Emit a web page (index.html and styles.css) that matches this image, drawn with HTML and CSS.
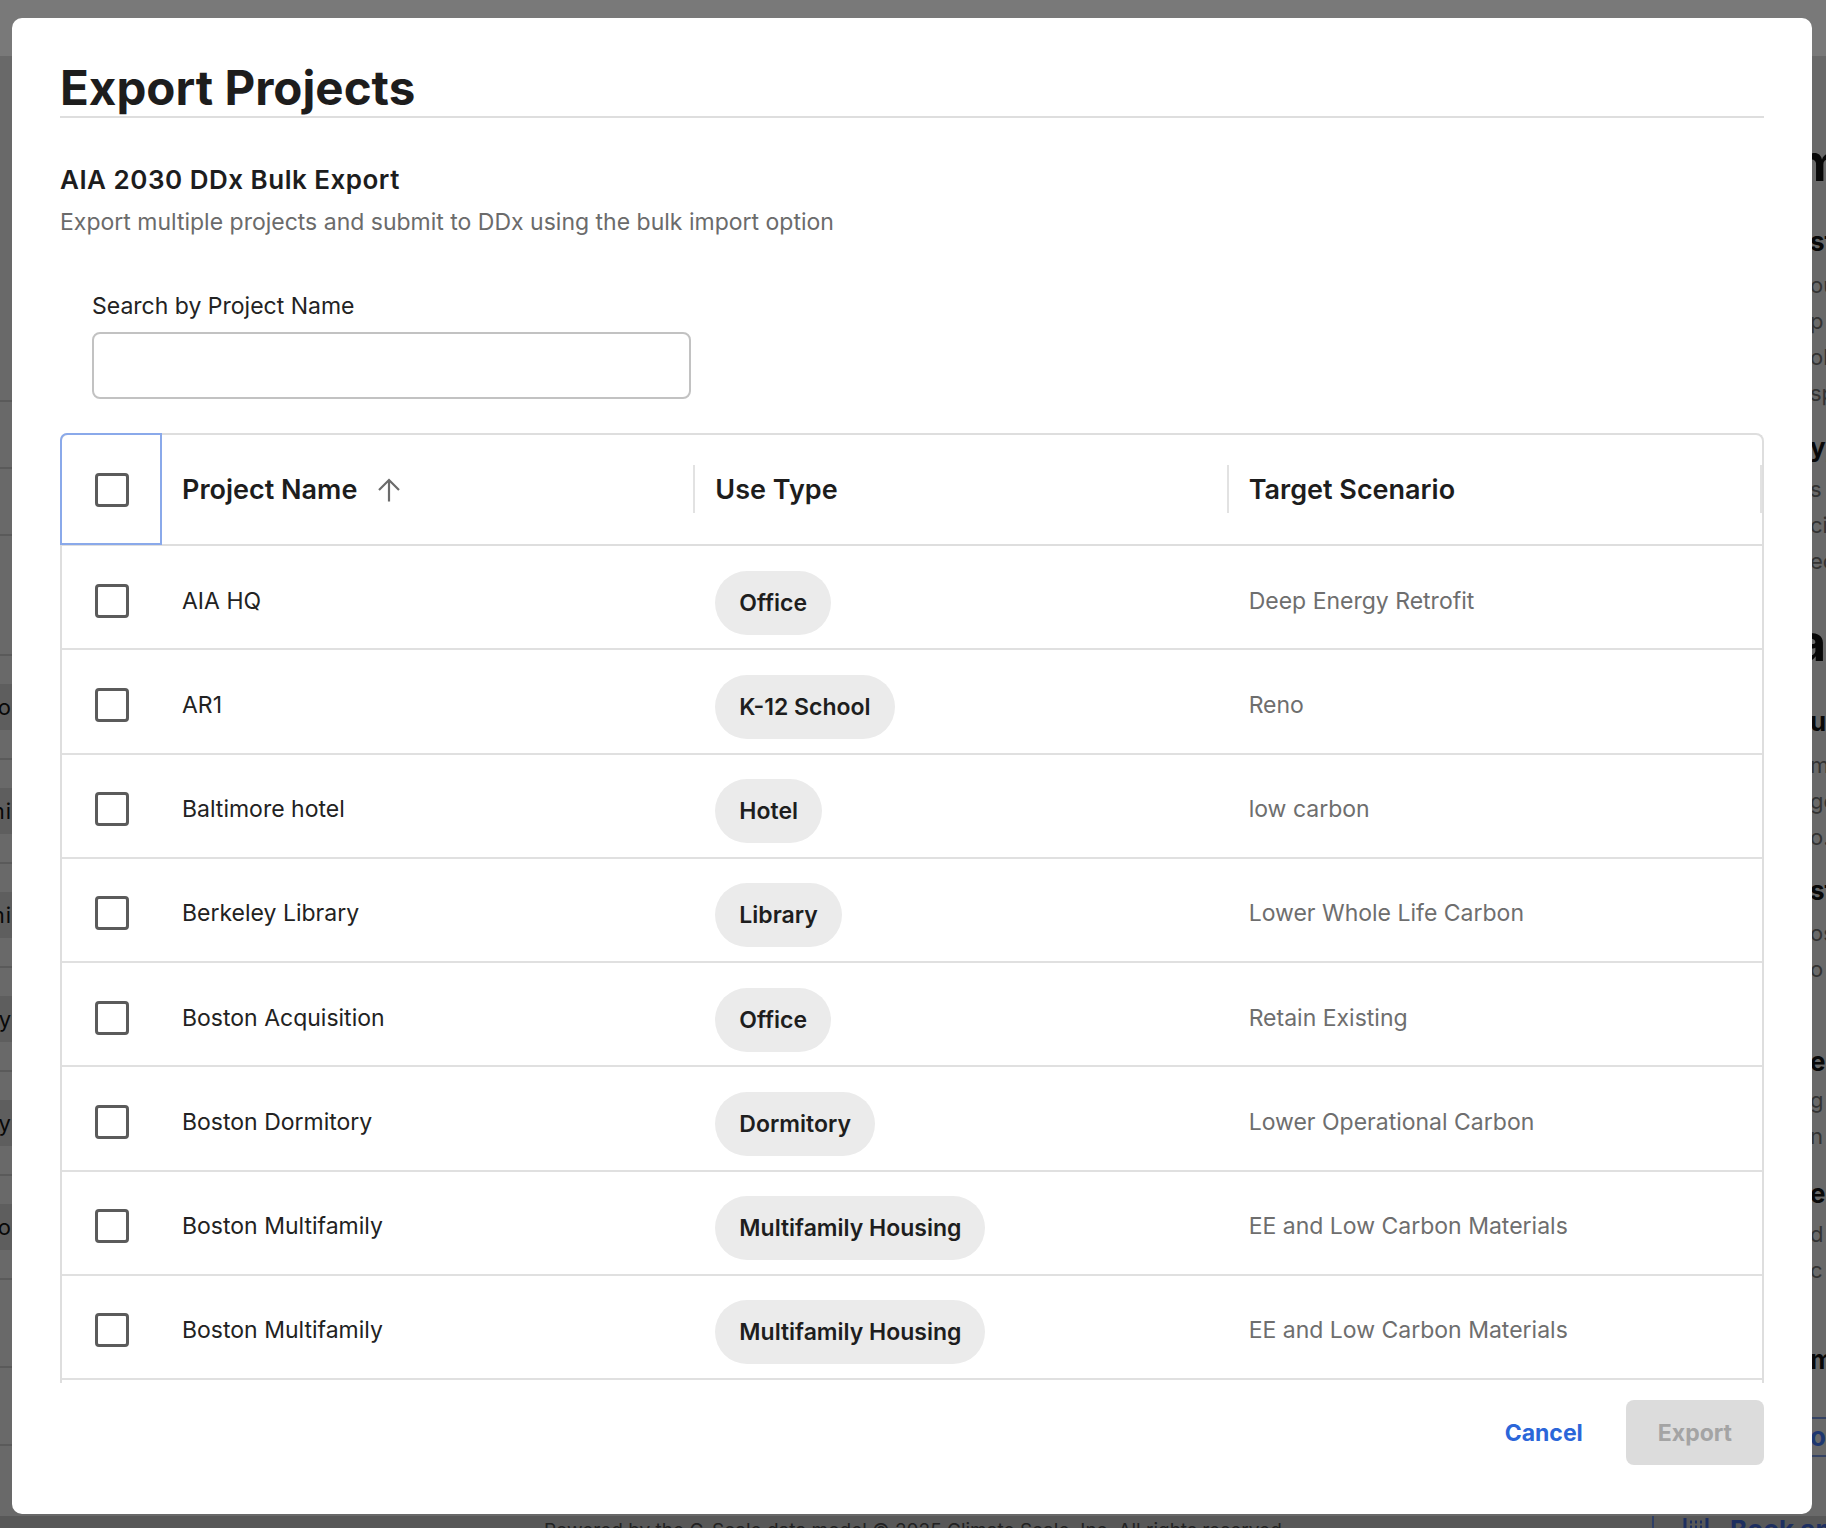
FILE: index.html
```html
<!DOCTYPE html>
<html lang="en">
<head>
<meta charset="utf-8">
<title>Export Projects</title>
<link rel="stylesheet" href="styles.css">
</head>
<body>
<div class="page" aria-hidden="true">
  <header class="app-header"></header>
  <div class="app-main">
    <div class="left-strip">
      <div class="ls-row ls-r1"></div>
      <div class="ls-row ls-r2"></div>
      <div class="ls-row ls-r2"></div>
      <div class="ls-row ls-r3"></div>
      <div class="ls-row ls-item"><span>Carbon Neo</span></div>
      <div class="ls-row ls-item"><span>Boston Multifami</span></div>
      <div class="ls-row ls-item"><span>Boston Multifami</span></div>
      <div class="ls-row ls-item"><span>Boston Dormity</span></div>
      <div class="ls-row ls-item"><span>Berkeley Library</span></div>
      <div class="ls-row ls-item"><span>AIA HQ Demo</span></div>
      <div class="ls-row ls-r4"></div>
      <div class="ls-row ls-r5"></div>
    </div>
    <div class="center-area"></div>
    <div class="rp">
      <div class="rp-line rp-big mt-89">mm</div>
      <div class="rp-line rp-h mt-43">st</div>
      <div class="rp-line rp-p mt-7">ou</div>
      <div class="rp-line rp-p">p</div>
      <div class="rp-line rp-p">ol</div>
      <div class="rp-line rp-p">sp</div>
      <div class="rp-line rp-h mt-19">y,</div>
      <div class="rp-line rp-p mt-5">s</div>
      <div class="rp-line rp-p">ci</div>
      <div class="rp-line rp-p">ec</div>
      <div class="rp-line rp-big mt-46">a</div>
      <div class="rp-line rp-h mt-43">ur</div>
      <div class="rp-line rp-p mt-7">m</div>
      <div class="rp-line rp-p">ge</div>
      <div class="rp-line rp-p">o.</div>
      <div class="rp-line rp-h mt-18">st</div>
      <div class="rp-line rp-p mt-6">os</div>
      <div class="rp-line rp-p">o</div>
      <div class="rp-line rp-h mt-57">e</div>
      <div class="rp-line rp-p mt-2">g</div>
      <div class="rp-line rp-p">n</div>
      <div class="rp-line rp-h mt-22">ec</div>
      <div class="rp-line rp-p mt-4">d</div>
      <div class="rp-line rp-p">c</div>
      <div class="rp-line rp-h mt-54">m</div>
      <div class="rp-line rp-blue mt-39">o</div>
    </div>
  </div>
  <footer class="app-footer">
    <span class="footer-text">Powered by the C-Scale data model © 2025 Climate Scale, Inc. All rights reserved.</span>
    <span class="footer-book">
      <svg class="book-icon" width="28" height="28" viewBox="0 0 28 28"><path d="M3 2V26 M25 2V26" stroke="#3d5fc0" stroke-width="3"/><path d="M8 6h2M13 6h2M18 6h2M8 11h2M13 11h2M18 11h2M8 16h2M13 16h2M18 16h2" stroke="#3d5fc0" stroke-width="3"/></svg>
      Book an</span>
  </footer>
</div>

<div class="overlay">
  <div class="modal" role="dialog" aria-labelledby="export-title">
    <h1 class="modal-title" id="export-title">Export Projects</h1>
    <h2 class="section-title">AIA 2030 DDx Bulk Export</h2>
    <p class="section-desc">Export multiple projects and submit to DDx using the bulk import option</p>

    <div class="search">
      <label class="search-label" for="search">Search by Project Name</label>
      <input class="search-input" id="search" type="text">
    </div>

    <div class="table">
      <div class="thead">
        <div class="th th-check"><span class="checkbox"></span></div>
        <div class="th th-col">Project Name
          <svg class="sort-icon" width="24" height="24" viewBox="0 0 24 24"><path d="M12 23.5V2 M2 12 L12 2 L22 12" fill="none" stroke="#6b6b6b" stroke-width="2.2"/></svg>
        </div>
        <div class="th th-col">Use Type</div>
        <div class="th th-col">Target Scenario</div>
      </div>
      <div class="tbody">
        <div class="tr">
          <div class="td td-check"><span class="checkbox"></span></div>
          <div class="td">AIA HQ</div>
          <div class="td"><span class="pill">Office</span></div>
          <div class="td td-muted">Deep Energy Retrofit</div>
        </div>
        <div class="tr">
          <div class="td td-check"><span class="checkbox"></span></div>
          <div class="td">AR1</div>
          <div class="td"><span class="pill">K-12 School</span></div>
          <div class="td td-muted">Reno</div>
        </div>
        <div class="tr">
          <div class="td td-check"><span class="checkbox"></span></div>
          <div class="td">Baltimore hotel</div>
          <div class="td"><span class="pill">Hotel</span></div>
          <div class="td td-muted">low carbon</div>
        </div>
        <div class="tr">
          <div class="td td-check"><span class="checkbox"></span></div>
          <div class="td">Berkeley Library</div>
          <div class="td"><span class="pill">Library</span></div>
          <div class="td td-muted">Lower Whole Life Carbon</div>
        </div>
        <div class="tr">
          <div class="td td-check"><span class="checkbox"></span></div>
          <div class="td">Boston Acquisition</div>
          <div class="td"><span class="pill">Office</span></div>
          <div class="td td-muted">Retain Existing</div>
        </div>
        <div class="tr">
          <div class="td td-check"><span class="checkbox"></span></div>
          <div class="td">Boston Dormitory</div>
          <div class="td"><span class="pill">Dormitory</span></div>
          <div class="td td-muted">Lower Operational Carbon</div>
        </div>
        <div class="tr">
          <div class="td td-check"><span class="checkbox"></span></div>
          <div class="td">Boston Multifamily</div>
          <div class="td"><span class="pill">Multifamily Housing</span></div>
          <div class="td td-muted">EE and Low Carbon Materials</div>
        </div>
        <div class="tr">
          <div class="td td-check"><span class="checkbox"></span></div>
          <div class="td">Boston Multifamily</div>
          <div class="td"><span class="pill">Multifamily Housing</span></div>
          <div class="td td-muted">EE and Low Carbon Materials</div>
        </div>
        <div class="tr">
          <div class="td td-check"><span class="checkbox"></span></div>
          <div class="td">Carbon Neutral Demo</div>
          <div class="td"><span class="pill">Office</span></div>
          <div class="td td-muted">Baseline</div>
        </div>
      </div>
    </div>

    <div class="footer">
      <button class="btn btn-cancel" type="button">Cancel</button>
      <button class="btn btn-export" type="button" disabled>Export</button>
    </div>
  </div>
</div>
</body>
</html>
```
FILE: styles.css
```css
html, body {
  margin: 0;
  padding: 0;
  height: 100%;
  overflow: hidden;
}
body {
  font-family: Inter, "Noto Sans", sans-serif;
  color: #1e1e1e;
}

/* ---------- underlying app page ---------- */
.page {
  height: 1528px;
  background: #d2d2d2;
  display: flex;
  flex-direction: column;
}
.app-header {
  height: 56px;
  flex: none;
  background: #f2f2f2;
}
.app-main {
  height: 1460px;
  flex: none;
  display: grid;
  grid-template-columns: 12px 1fr 36px;
  overflow: hidden;
}
.left-strip {
  display: flex;
  flex-direction: column;
}
.ls-row {
  border-bottom: 2px solid #b4b4b4;
  box-sizing: border-box;
  overflow: hidden;
  display: flex;
  justify-content: flex-end;
  align-items: center;
  white-space: nowrap;
  font-size: 22px;
  color: #111;
  flex: none;
}
.ls-row span { flex: none; }
.ls-r1 { height: 346px; }
.ls-r2 { height: 67px; }
.ls-r3 { height: 120px; }
.ls-item { height: 104px; }
.ls-item span {
  background: #bdbdbd;
  padding: 10px 0;
  letter-spacing: 1px;
}
.ls-r4 { height: 88px; }
.ls-r5 { height: 78px; }

.rp {
  padding-left: 20px;
  overflow: hidden;
  white-space: nowrap;
}
.rp-line {
  height: 36px;
  line-height: 36px;
  font-size: 22px;
}
.rp-p { color: #666; }
.rp-h { font-size: 26px; font-weight: 700; color: #111; }
.rp-big { font-size: 52px; font-weight: 700; color: #111; margin-left: -14px; }
.rp-blue {
  font-size: 26px;
  font-weight: 700;
  color: #3d6fe0;
  border-top: 2px solid #6b86c8;
  border-bottom: 2px solid #6b86c8;
}
.mt-2 { margin-top: 2px; }
.mt-4 { margin-top: 4px; }
.mt-5 { margin-top: 5px; }
.mt-6 { margin-top: 6px; }
.mt-7 { margin-top: 7px; }
.mt-18 { margin-top: 18px; }
.mt-19 { margin-top: 19px; }
.mt-22 { margin-top: 22px; }
.mt-39 { margin-top: 39px; }
.mt-43 { margin-top: 43px; }
.mt-46 { margin-top: 46px; }
.mt-54 { margin-top: 54px; }
.mt-57 { margin-top: 57px; }
.mt-89 { margin-top: 89px; }

.app-footer {
  height: 40px;
  flex: none;
  display: flex;
  background: #b0b0b0;
  padding-left: 544px;
}
.footer-text {
  font-size: 19px;
  line-height: 30px;
  color: #444;
  white-space: nowrap;
}
.footer-book {
  margin-left: auto;
  width: 174px;
  box-sizing: border-box;
  border-left: 2px solid #5f7fcf;
  display: flex;
  align-items: flex-start;
  gap: 20px;
  padding-left: 28px;
  font-size: 26px;
  font-weight: 700;
  line-height: 28px;
  color: #3d5fc0;
  white-space: nowrap;
  overflow: hidden;
}
.book-icon { flex: none; margin-top: 0; }

/* ---------- modal ---------- */
.overlay {
  position: fixed;
  inset: 0;
  background: rgba(0, 0, 0, 0.5);
  display: flex;
  padding: 18px 14px 14px 12px;
  box-sizing: border-box;
}
.modal {
  flex: 1;
  background: #fff;
  border-radius: 10px;
  display: flex;
  flex-direction: column;
  padding: 42px 48px 49px;
  box-sizing: border-box;
  min-width: 0;
}
.modal-title {
  margin: 0;
  font-size: 47.5px;
  font-weight: 700;
  line-height: 56px;
  color: #1d1d1d;
  border-bottom: 2px solid #dedede;
}
.section-title {
  margin: 46px 0 0;
  font-size: 26px;
  font-weight: 600;
  line-height: 32px;
  letter-spacing: 0.5px;
  color: #1d1d1d;
}
.section-desc {
  margin: 11px 0 0;
  font-size: 23px;
  line-height: 30px;
  color: #6b6b6b;
}
.search {
  margin-top: 54px;
  padding-left: 32px;
  display: flex;
  flex-direction: column;
  align-items: flex-start;
}
.search-label {
  font-size: 23px;
  line-height: 30px;
  color: #232323;
}
.search-input {
  margin-top: 11px;
  width: 599px;
  height: 67px;
  box-sizing: border-box;
  border: 2px solid #c2c2c2;
  border-radius: 8px;
  font: inherit;
  font-size: 23px;
  padding: 0 18px;
  outline: none;
}

/* ---------- table ---------- */
.table {
  margin-top: 34px;
  height: 950px;
  flex: none;
  box-sizing: border-box;
  border: 2px solid #dedede;
  border-bottom: 0;
  border-radius: 8px 8px 0 0;
  display: flex;
  flex-direction: column;
}
.thead,
.tr {
  display: grid;
  grid-template-columns: 100px repeat(3, 1fr);
}
.thead {
  height: 111px;
  flex: none;
  box-sizing: border-box;
  border-bottom: 2px solid #dedede;
}
.tbody {
  flex: 1;
  overflow: hidden;
}
.th {
  position: relative;
  display: flex;
  align-items: center;
  font-size: 27px;
  font-weight: 600;
  color: #1d1d1d;
}
.th-col {
  padding-left: 20px;
}
.th-col::after {
  content: "";
  position: absolute;
  right: 0;
  top: 30px;
  width: 2px;
  height: 48px;
  background: #e2e2e2;
}
.th-check {
  justify-content: center;
}
.th-check::before {
  content: "";
  position: absolute;
  top: -2px;
  left: -2px;
  right: 0;
  bottom: -1px;
  border: 2px solid #8aa9ea;
  border-top-left-radius: 7px;
}
.sort-icon {
  margin-left: 20px;
  flex: none;
}
.tr {
  height: 104.25px;
  box-sizing: border-box;
  padding-top: 7px;
  border-bottom: 2px solid #e0e0e0;
}
.td {
  display: flex;
  align-items: center;
  padding-left: 20px;
  font-size: 23px;
  color: #222;
  white-space: nowrap;
  min-width: 0;
}
.td-check {
  padding-left: 0;
  justify-content: center;
}
.td-muted {
  color: #6e6e6e;
}
.checkbox {
  width: 34px;
  height: 34px;
  box-sizing: border-box;
  border: 3px solid #5b5b5b;
  border-radius: 4px;
  background: #fff;
}
.pill {
  display: inline-flex;
  align-items: center;
  height: 64px;
  padding: 0 24px;
  margin-top: 4px;
  border-radius: 32px;
  background: #ebebeb;
  font-size: 23px;
  font-weight: 600;
  color: #1e1e1e;
}

/* ---------- footer ---------- */
.footer {
  margin-top: 17px;
  display: flex;
  justify-content: flex-end;
  gap: 21px;
}
.btn {
  height: 65px;
  border: 0;
  font-family: inherit;
  font-size: 23px;
  font-weight: 700;
  cursor: pointer;
}
.btn-cancel {
  background: none;
  color: #2b66d9;
  padding: 0 22px;
}
.btn-export {
  background: #dcdcdc;
  color: #a4a4a4;
  padding: 0 32px;
  border-radius: 8px;
}
```
